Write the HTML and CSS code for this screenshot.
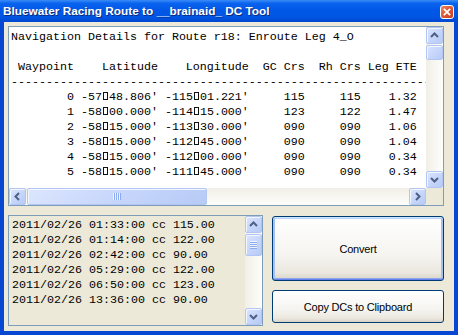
FILE: index.html
```html
<!DOCTYPE html>
<html lang="en">
<head>
    <meta charset="UTF-8">
    <title>Bluewater Racing Route to __brainaid_ DC Tool</title>
    <link rel="stylesheet" href="styles.css">
</head>
<body>
    <div class="window">
        <div class="titlebar">
            <span class="title">Bluewater Racing Route to __brainaid_ DC Tool</span>
            <div class="close-btn">
                <svg width="14" height="14" viewBox="0 0 14 14"><path d="M4 4 L10 10 M10 4 L4 10" stroke="#fff" stroke-width="2" stroke-linecap="square"/></svg>
            </div>
        </div>

        <div class="client">
            <!-- navigation details, read only -->
            <div class="textbox nav-box">
                <div class="nav-text">Navigation Details for Route r18: Enroute Leg 4_O

 Waypoint    Latitude    Longitude  GC Crs  Rh Crs Leg ETE
----------------------------------------------------------------------
        0 -57<i class="deg"></i>48.806' -115<i class="deg"></i>01.221'     115     115    1.32
        1 -58<i class="deg"></i>00.000' -114<i class="deg"></i>15.000'     123     122    1.47
        2 -58<i class="deg"></i>15.000' -113<i class="deg"></i>30.000'     090     090    1.06
        3 -58<i class="deg"></i>15.000' -112<i class="deg"></i>45.000'     090     090    1.04
        4 -58<i class="deg"></i>15.000' -112<i class="deg"></i>00.000'     090     090    0.34
        5 -58<i class="deg"></i>15.000' -111<i class="deg"></i>45.000'     090     090    0.34</div>

                <div class="scroll-v">
                    <div class="sb-btn"><svg width="15" height="15" viewBox="0 0 15 15"><path d="M4 9 L7.5 5.5 L11 9" class="arrow"/></svg></div>
                    <div class="sb-thumb small"></div>
                    <div class="sb-track"></div>
                    <div class="sb-btn"><svg width="15" height="15" viewBox="0 0 15 15"><path d="M4 6 L7.5 9.5 L11 6" class="arrow"/></svg></div>
                </div>

                <div class="scroll-h">
                    <div class="sb-btn"><svg width="15" height="15" viewBox="0 0 15 15"><path d="M9 4 L5.5 7.5 L9 11" class="arrow"/></svg></div>
                    <div class="sb-thumb wide">
                        <span class="grip-v"></span><span class="grip-v"></span><span class="grip-v"></span><span class="grip-v"></span>
                    </div>
                    <div class="sb-track"></div>
                    <div class="sb-btn"><svg width="15" height="15" viewBox="0 0 15 15"><path d="M6 4 L9.5 7.5 L6 11" class="arrow"/></svg></div>
                </div>

                <div class="corner"></div>
            </div>

            <div class="bottom-row">
                <div class="textbox dc-box">
                    <div class="dc-text">2011/02/26 01:33:00 cc 115.00
2011/02/26 01:14:00 cc 122.00
2011/02/26 02:42:00 cc 90.00
2011/02/26 05:29:00 cc 122.00
2011/02/26 06:50:00 cc 123.00
2011/02/26 13:36:00 cc 90.00</div>
                    <div class="scroll-v">
                        <div class="sb-btn"><svg width="15" height="15" viewBox="0 0 15 15"><path d="M4 9 L7.5 5.5 L11 9" class="arrow"/></svg></div>
                        <div class="sb-thumb tall">
                            <span class="grip-h"></span><span class="grip-h"></span><span class="grip-h"></span><span class="grip-h"></span>
                        </div>
                        <div class="sb-track"></div>
                        <div class="sb-btn"><svg width="15" height="15" viewBox="0 0 15 15"><path d="M4 6 L7.5 9.5 L11 6" class="arrow"/></svg></div>
                    </div>
                </div>

                <div class="buttons">
                    <button class="btn default">Convert</button>
                    <button class="btn">Copy DCs to Clipboard</button>
                </div>
            </div>
        </div>
    </div>
</body>
</html>
```

FILE: styles.css
```css
body {
    margin: 0;
    background: #fff;
}
.window {
    width: 458px;
    height: 335px;
    background: #0847d2;
    display: flex;
    flex-direction: column;
    overflow: hidden;
}
.titlebar {
    height: 22px;
    flex: none;
    display: flex;
    align-items: center;
    justify-content: space-between;
    padding: 0 4px 0 3px;
    background: linear-gradient(to bottom, #3b8cf7 0%, #0a63ee 15%, #0058e8 45%, #0055e3 75%, #0048d0 100%);
}
.title {
    font-family: 'Liberation Sans', Arial, sans-serif;
    font-weight: bold;
    font-size: 11.8px;
    color: #fff;
    text-shadow: 1px 1px 0 #0b2a7a;
    white-space: nowrap;
}
.close-btn {
    width: 14px;
    height: 14px;
    box-sizing: border-box;
    border: 1px solid #fff;
    border-radius: 3px;
    background: linear-gradient(135deg, #e9876a 0%, #e05a37 45%, #c8401f 100%);
    display: flex;
    align-items: center;
    justify-content: center;
    margin-top: 1px;
}
.close-btn svg {
    width: 12px;
    height: 12px;
}
.client {
    flex: 1;
    margin: 0 4px 4px 4px;
    background: #ece9d8;
    padding: 4px 10px 5px 4px;
    display: flex;
    flex-direction: column;
    gap: 9px;
}
.textbox {
    border: 1px solid #7f9db9;
    box-sizing: border-box;
}
.nav-box {
    height: 180px;
    background: #fff;
    display: grid;
    grid-template-columns: 1fr 17px;
    grid-template-rows: 1fr 17px;
}
.nav-text, .dc-text {
    font-family: 'Liberation Mono', 'Courier New', monospace;
    font-size: 11.667px;
    line-height: 15px;
    color: #000;
    white-space: pre;
    overflow: hidden;
}
.nav-text {
    padding: 3px 0 0 2px;
}
.deg {
    display: inline-block;
    box-sizing: border-box;
    width: 5px;
    height: 8px;
    margin: 0 1px;
    border: 1px solid #111;
}
.corner {
    background: #ece9d8;
}
.scroll-v, .scroll-h {
    display: flex;
    background: linear-gradient(to right, #f1efe6, #fdfdfb);
}
.scroll-v {
    flex-direction: column;
}
.scroll-h {
    background: linear-gradient(to bottom, #f1efe6, #fdfdfb);
}
.sb-track {
    flex: 1;
}
.sb-btn, .sb-thumb {
    box-sizing: border-box;
    border: 1px solid #b2c5f3;
    border-radius: 2px;
    background: linear-gradient(135deg, #dbe5fd 0%, #c7d6fb 50%, #b7cbf6 100%);
    box-shadow: inset 1px 1px 0 #f2f6ff;
    flex: none;
}
.sb-btn {
    width: 17px;
    height: 17px;
    display: flex;
    align-items: center;
    justify-content: center;
}
.arrow {
    fill: none;
    stroke: #4d6185;
    stroke-width: 2;
}
.sb-thumb.small {
    height: 15px;
    margin-top: 1px;
}
.sb-thumb.tall {
    height: 22px;
    margin-top: 1px;
    display: flex;
    flex-direction: column;
    align-items: center;
    justify-content: center;
    gap: 1px;
}
.sb-thumb.wide {
    width: 180px;
    margin-left: 1px;
    display: flex;
    align-items: center;
    justify-content: center;
    gap: 1px;
}
.grip-h {
    width: 7px;
    height: 1px;
    background: #8caaf0;
    box-shadow: 0 -1px 0 #eef3fe;
}
.grip-v {
    width: 1px;
    height: 7px;
    background: #8caaf0;
    box-shadow: -1px 0 0 #eef3fe;
}
.bottom-row {
    display: grid;
    grid-template-columns: 255px 172px;
    gap: 9px;
    height: 111px;
}
.dc-box {
    display: grid;
    grid-template-columns: 1fr 17px;
    background: #ece9d8;
}
.dc-text {
    padding: 2px 0 0 3px;
}
.buttons {
    display: flex;
    flex-direction: column;
    gap: 9px;
    padding-top: 1px;
}
.btn {
    font-family: 'Liberation Sans', Arial, sans-serif;
    font-size: 11px;
    letter-spacing: -0.2px;
    color: #000;
    border: 1px solid #003c74;
    border-radius: 3px;
    background: linear-gradient(to bottom, #ffffff 0%, #f5f4f0 60%, #ebe8df 88%, #d8d3c7 100%);
    height: 33px;
    padding: 0;
}
.btn.default {
    height: 65px;
    box-shadow: inset 0 1px 0 #cee7ff, inset 0 -1px 0 #6982ee, inset 2px 0 0 #a6c1f0, inset -2px 0 0 #a6c1f0, inset 0 2px 0 #bcd4f8, inset 0 -2px 0 #8aa6ec;
}
```
